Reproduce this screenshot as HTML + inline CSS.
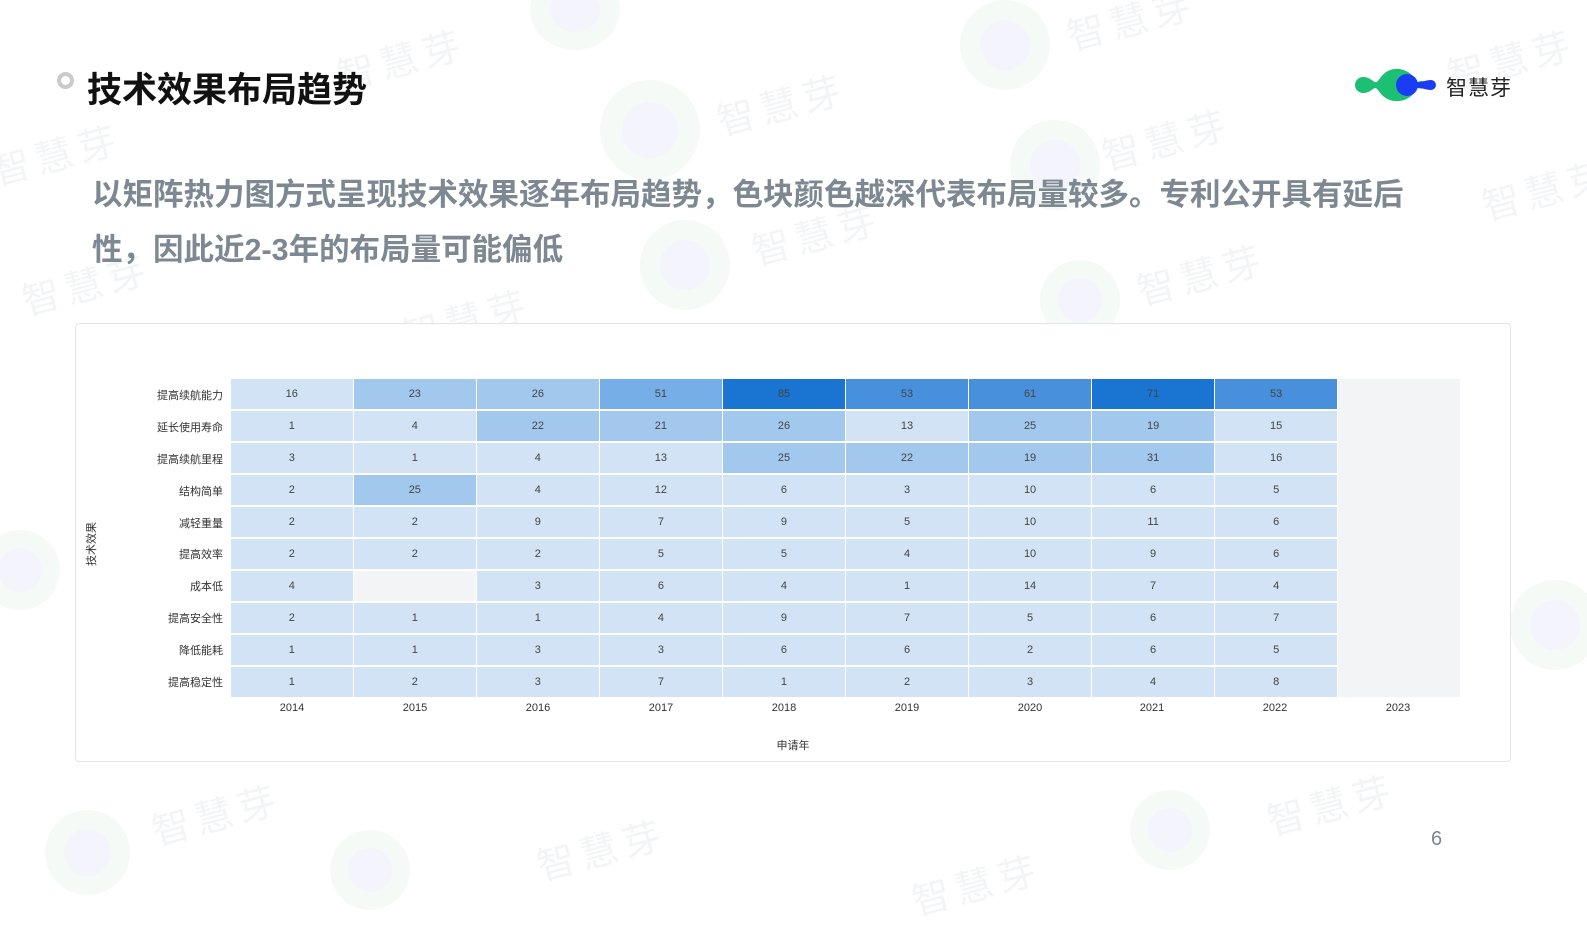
<!DOCTYPE html>
<html><head><meta charset="utf-8"><style>
*{margin:0;padding:0;box-sizing:border-box}
body{width:1587px;height:892px;background:#fff;position:relative;overflow:hidden;font-family:"Liberation Sans","Noto Sans CJK SC",sans-serif}
.wm{position:absolute;color:#f3f4f5;font-size:38px;transform:rotate(-15deg);letter-spacing:6px;white-space:nowrap}
.blob{position:absolute;border-radius:50%;background:#f5faf6}
.blob i{position:absolute;left:22%;top:22%;width:56%;height:56%;border-radius:50%;background:#f4f4fc}
.title{position:absolute;left:87px;top:62px;font-size:35px;font-weight:bold;color:#111;letter-spacing:0}
.ring{position:absolute;left:57px;top:72px;width:17px;height:17px;border-radius:50%;border:4px solid #c8cacd}
.desc{position:absolute;left:92px;top:168px;width:1330px;font-size:30.5px;font-weight:bold;color:#7d8893;line-height:55px}
.card{position:absolute;left:75px;top:323px;width:1436px;height:439px;border:1px solid #e4e5e7;border-radius:4px;background:#fff}
.grid{position:absolute;left:231px;top:379px;width:1229px;height:318px;display:grid;grid-template-columns:repeat(10,1fr);grid-template-rows:repeat(10,1fr);gap:2px 1.5px}
.grid div{display:flex;align-items:center;justify-content:center;font-size:11px;color:#444}
.L{background:#d1e3f5}.M{background:#a3c8ee}.M2{background:#76aee8}.D{background:#1a74d2}.D2{background:#4890dc}.E{background:#f3f4f6}
.rl{position:absolute;right:1364px;font-size:11px;color:#333;text-align:right;white-space:nowrap}
.yr{position:absolute;top:702px;font-size:11px;color:#333;width:60px;text-align:center}
</style></head><body>
<div class="blob" style="left:530px;top:-30px;width:90px;height:80px"><i></i></div>
<div class="blob" style="left:600px;top:80px;width:100px;height:100px"><i></i></div>
<div class="blob" style="left:960px;top:0px;width:90px;height:90px"><i></i></div>
<div class="blob" style="left:1010px;top:120px;width:90px;height:90px"><i></i></div>
<div class="blob" style="left:640px;top:220px;width:90px;height:90px"><i></i></div>
<div class="blob" style="left:1040px;top:260px;width:80px;height:80px"><i></i></div>
<div class="blob" style="left:1510px;top:580px;width:90px;height:90px"><i></i></div>
<div class="blob" style="left:45px;top:810px;width:85px;height:85px"><i></i></div>
<div class="blob" style="left:330px;top:830px;width:80px;height:80px"><i></i></div>
<div class="blob" style="left:1130px;top:790px;width:80px;height:80px"><i></i></div>
<div class="blob" style="left:-20px;top:530px;width:80px;height:80px"><i></i></div>
<div class="wm" style="left:335px;top:30px">智慧芽</div>
<div class="wm" style="left:715px;top:75px">智慧芽</div>
<div class="wm" style="left:1065px;top:-10px">智慧芽</div>
<div class="wm" style="left:1445px;top:30px">智慧芽</div>
<div class="wm" style="left:-10px;top:125px">智慧芽</div>
<div class="wm" style="left:1100px;top:110px">智慧芽</div>
<div class="wm" style="left:1480px;top:160px">智慧芽</div>
<div class="wm" style="left:750px;top:205px">智慧芽</div>
<div class="wm" style="left:20px;top:255px">智慧芽</div>
<div class="wm" style="left:1135px;top:245px">智慧芽</div>
<div class="wm" style="left:400px;top:290px">智慧芽</div>
<div class="wm" style="left:150px;top:785px">智慧芽</div>
<div class="wm" style="left:535px;top:820px">智慧芽</div>
<div class="wm" style="left:1265px;top:775px">智慧芽</div>
<div class="wm" style="left:910px;top:855px">智慧芽</div>

<div class="ring"></div>
<div class="title">技术效果布局趋势</div>
<svg style="position:absolute;left:1355px;top:67px" width="85" height="36" viewBox="0 0 85 36">
<path d="M8 10 C14 10 16 13 20 15 C24 17 26 3 40 2 C52 1 60 10 62 15 C66 13 70 14 74 17 L74 19 C70 22 66 22 62 21 C60 27 52 35 40 34 C26 33 24 21 20 21 C16 23 14 26 8 26 A8 8 0 0 1 8 10Z" fill="#1dbf73"/>
<circle cx="52" cy="18" r="11" fill="#1a3cf5"/>
<path d="M60 15 C66 16 70 13 76 13 A5 5 0 0 1 76 23 C70 23 66 20 60 21Z" fill="#1a3cf5"/>
</svg>
<div style="position:absolute;left:1446px;top:72px;font-size:21px;color:#222;letter-spacing:1px">智慧芽</div>

<div class="desc">以矩阵热力图方式呈现技术效果逐年布局趋势，色块颜色越深代表布局量较多。专利公开具有延后性，因此近2-3年的布局量可能偏低</div>

<div class="card"></div>
<div class="grid">
<div class="L">16</div><div class="M">23</div><div class="M">26</div><div class="M2">51</div><div class="D">85</div><div class="D2">53</div><div class="D2">61</div><div class="D">71</div><div class="D2">53</div><div class="E" style="grid-row:1/11;grid-column:10"></div>
<div class="L">1</div><div class="L">4</div><div class="M">22</div><div class="M">21</div><div class="M">26</div><div class="L">13</div><div class="M">25</div><div class="M">19</div><div class="L">15</div>
<div class="L">3</div><div class="L">1</div><div class="L">4</div><div class="L">13</div><div class="M">25</div><div class="M">22</div><div class="M">19</div><div class="M">31</div><div class="L">16</div>
<div class="L">2</div><div class="M">25</div><div class="L">4</div><div class="L">12</div><div class="L">6</div><div class="L">3</div><div class="L">10</div><div class="L">6</div><div class="L">5</div>
<div class="L">2</div><div class="L">2</div><div class="L">9</div><div class="L">7</div><div class="L">9</div><div class="L">5</div><div class="L">10</div><div class="L">11</div><div class="L">6</div>
<div class="L">2</div><div class="L">2</div><div class="L">2</div><div class="L">5</div><div class="L">5</div><div class="L">4</div><div class="L">10</div><div class="L">9</div><div class="L">6</div>
<div class="L">4</div><div class="E"></div><div class="L">3</div><div class="L">6</div><div class="L">4</div><div class="L">1</div><div class="L">14</div><div class="L">7</div><div class="L">4</div>
<div class="L">2</div><div class="L">1</div><div class="L">1</div><div class="L">4</div><div class="L">9</div><div class="L">7</div><div class="L">5</div><div class="L">6</div><div class="L">7</div>
<div class="L">1</div><div class="L">1</div><div class="L">3</div><div class="L">3</div><div class="L">6</div><div class="L">6</div><div class="L">2</div><div class="L">6</div><div class="L">5</div>
<div class="L">1</div><div class="L">2</div><div class="L">3</div><div class="L">7</div><div class="L">1</div><div class="L">2</div><div class="L">3</div><div class="L">4</div><div class="L">8</div>
</div>
<div class="rl" style="top:387px">提高续航能力</div>
<div class="rl" style="top:419px">延长使用寿命</div>
<div class="rl" style="top:451px">提高续航里程</div>
<div class="rl" style="top:483px">结构简单</div>
<div class="rl" style="top:515px">减轻重量</div>
<div class="rl" style="top:546px">提高效率</div>
<div class="rl" style="top:578px">成本低</div>
<div class="rl" style="top:610px">提高安全性</div>
<div class="rl" style="top:642px">降低能耗</div>
<div class="rl" style="top:674px">提高稳定性</div>
<div style="position:absolute;left:68px;top:536px;width:46px;font-size:11px;color:#333;transform:rotate(-90deg);text-align:center">技术效果</div>
<div class="yr" style="left:262px">2014</div><div class="yr" style="left:385px">2015</div><div class="yr" style="left:508px">2016</div><div class="yr" style="left:631px">2017</div><div class="yr" style="left:754px">2018</div><div class="yr" style="left:877px">2019</div><div class="yr" style="left:1000px">2020</div><div class="yr" style="left:1122px">2021</div><div class="yr" style="left:1245px">2022</div><div class="yr" style="left:1368px">2023</div>
<div style="position:absolute;left:763px;top:737px;width:60px;text-align:center;font-size:11px;color:#333">申请年</div>
<div style="position:absolute;left:1431px;top:828px;font-size:20px;color:#7a8794">6</div>
</body></html>
